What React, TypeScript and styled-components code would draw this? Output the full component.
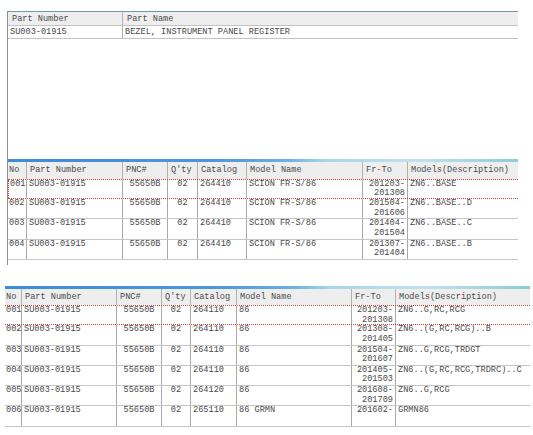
import React from 'react';
import styled, { createGlobalStyle } from 'styled-components';

const Global = createGlobalStyle`
  html, body { margin: 0; padding: 0; background: #ffffff; }
  body {
    font-family: "Liberation Mono", "Courier New", monospace;
    font-size: 8.6px;
    color: #4a4a4a;
  }
`;

const Page = styled.div`
  width: 533px;
  height: 435px;
  overflow: hidden;
  box-sizing: border-box;
  padding-top: 11px;
  display: flex;
  flex-direction: column;
`;

const Panel = styled.div`
  margin-left: 7px;
  width: 511px;
  height: 254px;
  box-sizing: border-box;
  border-left: 1px solid #8e8e8e;
  border-top: 1px solid #7597a1;
  display: flex;
  flex-direction: column;
`;

const Spacer = styled.div`
  flex: 1;
`;

const SimpleTable = styled.div`
  display: grid;
  grid-template-columns: 115px 1fr;
`;

const SimpleHead = styled.div<{ $last?: boolean }>`
  height: 14px;
  box-sizing: border-box;
  background: #eeeeee;
  border-bottom: 1px solid #c2c2c2;
  border-right: ${p => (p.$last ? 'none' : '1px solid #b4b4b4')};
  padding: 0 4px;
  display: flex;
  align-items: center;
  white-space: nowrap;
`;

const SimpleCell = styled.div<{ $last?: boolean }>`
  height: 13px;
  box-sizing: border-box;
  border-bottom: 1px solid #c2c2c2;
  border-right: ${p => (p.$last ? 'none' : '1px solid #b4b4b4')};
  padding: 0 2px;
  display: flex;
  align-items: center;
  white-space: nowrap;
`;

const TableWrap = styled.div<{ $ml: number; $w: number; $mt?: number; $mb?: number }>`
  margin-left: ${p => p.$ml}px;
  margin-top: ${p => p.$mt ?? 0}px;
  margin-bottom: ${p => p.$mb ?? 0}px;
  width: ${p => p.$w}px;
  display: flex;
  flex-direction: column;
`;

const BlueBar = styled.div`
  height: 3px;
  background: linear-gradient(
    90deg,
    #3d8cd9 0%,
    #4b97de 40%,
    #6cb0e2 55%,
    #a6d6ea 62%,
    #bfe3ee 80%,
    #8fcad9 100%
  );
`;

const Row = styled.div<{ $cols: string; $h: number }>`
  display: grid;
  grid-template-columns: ${p => p.$cols};
  height: ${p => p.$h}px;
  box-sizing: border-box;
`;

const HeadRow = styled(Row)`
  background: #eeeeee;
`;

const BodyRow = styled(Row)<{ $selected?: boolean }>`
  border-top: ${p => (p.$selected ? '1px dotted #d23c3c' : 'none')};
  border-bottom: ${p => (p.$selected ? '1px dotted #d23c3c' : '1px solid #c6c6c6')};
`;

const HeadCell = styled.div`
  padding: 0 3px;
  display: flex;
  align-items: center;
  white-space: nowrap;
  overflow: hidden;
  border-right: 1px solid #b2b2b2;
  &:first-child { padding: 0 1px; }
  &:last-child { border-right: none; }
`;

type Align = 'left' | 'center' | 'right';

const BodyCell = styled.div<{ $align: Align; $mark?: boolean }>`
  padding: 0 2px;
  line-height: 9.6px;
  text-align: ${p => p.$align};
  overflow: hidden;
  border-right: 1px solid #a9a9a9;
  border-left: ${p => (p.$mark ? '1px dotted #d23c3c' : 'none')};
  &:first-child { padding: 0 0 0 1px; overflow: visible; }
  &:last-child { border-right: none; }
`;

const headers = ['No', 'Part Number', 'PNC#', "Q'ty", 'Catalog', 'Model Name', 'Fr-To', 'Models(Description)'];
const aligns: Align[] = ['left', 'left', 'center', 'center', 'left', 'left', 'right', 'left'];

type Rec = [string, string, string, string, string, string, string, string];

const table2: Rec[] = [
  ['001', 'SU003-01915', '55650B', '02', '264410', 'SCION FR-S/86', '201203-201308', 'ZN6..BASE'],
  ['002', 'SU003-01915', '55650B', '02', '264410', 'SCION FR-S/86', '201504-201606', 'ZN6..BASE..D'],
  ['003', 'SU003-01915', '55650B', '02', '264410', 'SCION FR-S/86', '201404-201504', 'ZN6..BASE..C'],
  ['004', 'SU003-01915', '55650B', '02', '264410', 'SCION FR-S/86', '201307-201404', 'ZN6..BASE..B'],
];

const table3: Rec[] = [
  ['001', 'SU003-01915', '55650B', '02', '264110', '86', '201203-201308', 'ZN6..G,RC,RCG'],
  ['002', 'SU003-01915', '55650B', '02', '264110', '86', '201308-201405', 'ZN6..(G,RC,RCG)..B'],
  ['003', 'SU003-01915', '55650B', '02', '264110', '86', '201504-201607', 'ZN6..G,RCG,TRDGT'],
  ['004', 'SU003-01915', '55650B', '02', '264110', '86', '201405-201503', 'ZN6..(G,RC,RCG,TRDRC)..C'],
  ['005', 'SU003-01915', '55650B', '02', '264120', '86', '201608-201709', 'ZN6..G,RCG'],
  ['006', 'SU003-01915', '55650B', '02', '265110', '86 GRMN', '201602-', 'GRMN86'],
];

const PartTable: React.FC<{
  cols: string;
  headH: number;
  rowH: number;
  rows: Rec[];
  markLeft?: boolean;
}> = ({ cols, headH, rowH, rows, markLeft }) => (
  <>
    <BlueBar />
    <HeadRow $cols={cols} $h={headH}>
      {headers.map(h => (
        <HeadCell key={h}>{h}</HeadCell>
      ))}
    </HeadRow>
    {rows.map((r, i) => (
      <BodyRow key={r[0]} $cols={cols} $h={rowH} $selected={i === 0}>
        {r.map((v, j) => (
          <BodyCell key={j} $align={aligns[j]} $mark={markLeft && i === 0 && j === 0}>
            {v}
          </BodyCell>
        ))}
      </BodyRow>
    ))}
  </>
);

export default function App() {
  return (
    <>
      <Global />
      <Page>
        <Panel>
          <SimpleTable>
            <SimpleHead>Part Number</SimpleHead>
            <SimpleHead $last>Part Name</SimpleHead>
            <SimpleCell>SU003-01915</SimpleCell>
            <SimpleCell $last>BEZEL, INSTRUMENT PANEL REGISTER</SimpleCell>
          </SimpleTable>
          <Spacer />
          <TableWrap $ml={0} $w={510} $mb={5}>
            <PartTable
              cols="19px 96px 45px 30px 49px 116px 45px 1fr"
              headH={17}
              rowH={20.3}
              rows={table2}
              markLeft
            />
          </TableWrap>
        </Panel>
        <TableWrap $ml={5} $w={525} $mt={21}>
          <PartTable
            cols="17px 95px 45px 29px 46px 115px 44px 1fr"
            headH={16}
            rowH={20.3}
            rows={table3}
          />
        </TableWrap>
      </Page>
    </>
  );
}
